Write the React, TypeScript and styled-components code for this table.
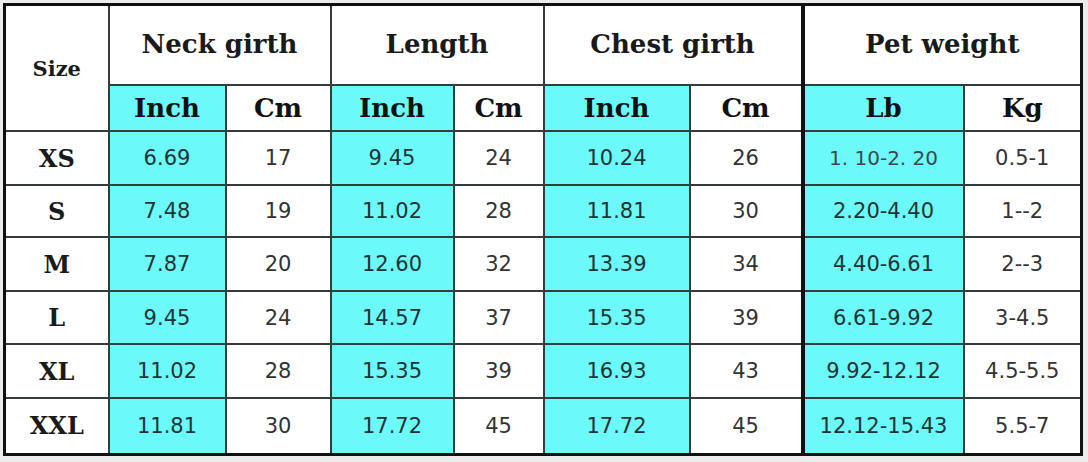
import React from "react";
import styled, { createGlobalStyle } from "styled-components";

const Global = createGlobalStyle`
  html, body { margin: 0; padding: 0; background: #ececec; }
  #root { padding: 3px 0 0 3px; }
`;

const CYAN = "#6cf9f9";
const LINE = "#363b3b";
const THICK = "#111";

const Table = styled.table`
  border-collapse: collapse;
  table-layout: fixed;
  width: 1080px;
  background: #fff;
  border: 3px solid ${THICK};
`;

const Col = styled.col<{ $w: number }>`
  width: ${(p) => p.$w}px;
`;

const cellBase = `
  border: 2px solid ${LINE};
  text-align: center;
  vertical-align: middle;
  padding: 0;
`;

const GroupHead = styled.th<{ $thickLeft?: boolean }>`
  ${cellBase}
  height: 76px;
  font-family: "DejaVu Serif", "Liberation Serif", serif;
  font-weight: bold;
  font-size: 26px;
  color: #1a1a1a;
  padding-bottom: 2px;
  ${(p) => (p.$thickLeft ? `border-left: 4px solid ${THICK};` : "")}
`;

const SizeHead = styled.th`
  ${cellBase}
  font-family: "DejaVu Serif", "Liberation Serif", serif;
  font-weight: bold;
  font-size: 21px;
  color: #1a1a1a;
`;

const UnitHead = styled.th<{ $cyan?: boolean; $thickLeft?: boolean }>`
  ${cellBase}
  height: 44px;
  font-family: "DejaVu Serif", "Liberation Serif", serif;
  font-weight: bold;
  font-size: 26px;
  color: #111;
  background: ${(p) => (p.$cyan ? CYAN : "#fff")};
  ${(p) => (p.$thickLeft ? `border-left: 4px solid ${THICK};` : "")}
`;

const RowLabel = styled.th`
  ${cellBase}
  font-family: "DejaVu Serif", "Liberation Serif", serif;
  font-weight: bold;
  font-size: 24px;
  color: #1a1a1a;
`;

const DataCell = styled.td<{ $cyan?: boolean; $light?: boolean; $thickLeft?: boolean }>`
  ${cellBase}
  font-family: "DejaVu Sans", Verdana, sans-serif;
  font-size: ${(p) => (p.$light ? "20px" : "21px")};
  color: ${(p) => (p.$light ? "#3a4a4a" : p.$cyan ? "#1f3535" : "#333")};
  background: ${(p) => (p.$cyan ? CYAN : "#fff")};
  ${(p) => (p.$thickLeft ? `border-left: 4px solid ${THICK};` : "")}
`;

const Row = styled.tr<{ $h: number }>`
  height: ${(p) => p.$h}px;
`;

type R = { size: string; v: string[]; h: number };

const rows: R[] = [
  { size: "XS", v: ["6.69", "17", "9.45", "24", "10.24", "26", "1. 10-2. 20", "0.5-1"], h: 54 },
  { size: "S", v: ["7.48", "19", "11.02", "28", "11.81", "30", "2.20-4.40", "1--2"], h: 52 },
  { size: "M", v: ["7.87", "20", "12.60", "32", "13.39", "34", "4.40-6.61", "2--3"], h: 54 },
  { size: "L", v: ["9.45", "24", "14.57", "37", "15.35", "39", "6.61-9.92", "3-4.5"], h: 53 },
  { size: "XL", v: ["11.02", "28", "15.35", "39", "16.93", "43", "9.92-12.12", "4.5-5.5"], h: 54 },
  { size: "XXL", v: ["11.81", "30", "17.72", "45", "17.72", "45", "12.12-15.43", "5.5-7"], h: 56 },
];

const widths = [104, 117, 105, 123, 90, 146, 113, 161, 118];
const units = ["Inch", "Cm", "Inch", "Cm", "Inch", "Cm", "Lb", "Kg"];

export default function App() {
  return (
    <>
      <Global />
      <Table>
        <colgroup>
          {widths.map((w, i) => (
            <Col key={i} $w={w} />
          ))}
        </colgroup>
        <thead>
          <tr>
            <SizeHead rowSpan={2}>Size</SizeHead>
            <GroupHead colSpan={2}>Neck girth</GroupHead>
            <GroupHead colSpan={2}>Length</GroupHead>
            <GroupHead colSpan={2}>Chest girth</GroupHead>
            <GroupHead colSpan={2} $thickLeft>
              Pet weight
            </GroupHead>
          </tr>
          <tr>
            {units.map((u, i) => (
              <UnitHead key={i} $cyan={i % 2 === 0} $thickLeft={i === 6}>
                {u}
              </UnitHead>
            ))}
          </tr>
        </thead>
        <tbody>
          {rows.map((r) => (
            <Row key={r.size} $h={r.h}>
              <RowLabel>{r.size}</RowLabel>
              {r.v.map((v, i) => (
                <DataCell key={i} $cyan={i % 2 === 0} $thickLeft={i === 6} $light={v.includes(". ")}>
                  {v}
                </DataCell>
              ))}
            </Row>
          ))}
        </tbody>
      </Table>
    </>
  );
}
